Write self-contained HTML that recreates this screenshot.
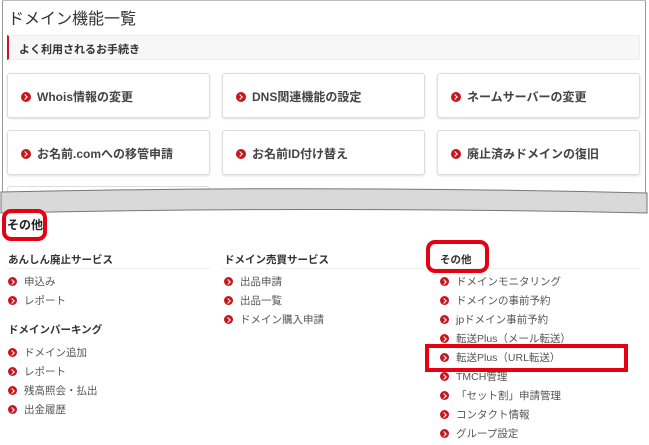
<!DOCTYPE html>
<html><head><meta charset="utf-8"><style>
*{margin:0;padding:0;box-sizing:border-box}
body{width:649px;height:445px;background:#fff;font-family:"Liberation Sans","Noto Sans CJK JP",sans-serif;color:#333;position:relative;overflow:hidden}
.a{position:absolute}
.frame{left:2px;top:0;width:644px;height:200px;border:1px solid #999;border-bottom:none;border-top:none}
.card{position:absolute;width:203px;height:45px;border:1px solid #ddd;border-radius:3px;box-shadow:0 1px 2px #ddd;background:#fff;font-size:12px;font-weight:bold;color:#444;padding:14px 0 0 13px;white-space:nowrap}
.ic{display:inline-block;width:10px;height:10px;border-radius:50%;background:#c8161d;position:relative;vertical-align:-1px;margin-right:6px}
.ic:after{content:"";position:absolute;left:2px;top:3px;width:3px;height:3px;border-right:1.5px solid #fff;border-top:1.5px solid #fff;transform:rotate(45deg)}
.it{position:absolute;font-size:10.5px;color:#555;white-space:nowrap}
.it .ic{width:9px;height:9px;margin-right:7px}
.it .ic:after{left:1.5px;top:2.5px}
.h{position:absolute;font-size:10.5px;font-weight:bold;color:#333}
.rb{position:absolute;border:4px solid #e60012}
</style></head><body>
<div class="a frame"></div>
<div class="a" style="left:2px;top:0;width:644px;height:1px;background:#bbb"></div>
<div class="a" style="left:8px;top:5px;font-size:16px;color:#333">ドメイン機能一覧</div>
<div class="a" style="left:7px;top:35px;width:633px;height:25px;background:#f7f7f7;border:1px solid #eee;border-left:2px solid #c8161d;font-size:11px;font-weight:bold;padding:5px 0 0 10px">よく利用されるお手続き</div>
<div class="card" style="left:7px;top:73px"><span class="ic"></span>Whois情報の変更</div>
<div class="card" style="left:222px;top:73px"><span class="ic"></span>DNS関連機能の設定</div>
<div class="card" style="left:437px;top:73px"><span class="ic"></span>ネームサーバーの変更</div>
<div class="card" style="left:7px;top:130px"><span class="ic"></span>お名前.comへの移管申請</div>
<div class="card" style="left:222px;top:130px"><span class="ic"></span>お名前ID付け替え</div>
<div class="card" style="left:437px;top:130px"><span class="ic"></span>廃止済みドメインの復旧</div>
<div class="card" style="left:7px;top:186px;height:10px;box-shadow:none"></div>
<svg class="a" style="left:0;top:186px" width="649" height="30"><path d="M1 6 Q320 -1 647 7 L647 27 Q320 20 1 27 Z" fill="#d9d9d9" stroke="#777" stroke-width="1"/></svg>
<div class="a" style="left:7px;top:216px;font-size:12px;font-weight:bold;color:#222">その他</div>
<div class="rb" style="left:2px;top:209px;width:45px;height:32px;border-radius:9px"></div>
<div class="a" style="left:7px;top:268px;width:203px;height:1px;background:#eee"></div>
<div class="a" style="left:222px;top:268px;width:203px;height:1px;background:#eee"></div>
<div class="a" style="left:437px;top:268px;width:203px;height:1px;background:#eee"></div>
<div class="h" style="left:8px;top:252px">あんしん廃止サービス</div>
<div class="h" style="left:224px;top:252px">ドメイン売買サービス</div>
<div class="h" style="left:440px;top:252px">その他</div>
<div class="rb" style="left:426px;top:240px;width:63px;height:33px;border-radius:9px"></div>
<div class="it" style="left:8px;top:274px"><span class="ic"></span>申込み</div>
<div class="it" style="left:8px;top:293px"><span class="ic"></span>レポート</div>
<div class="h" style="left:8px;top:322px">ドメインパーキング</div>
<div class="it" style="left:8px;top:345px"><span class="ic"></span>ドメイン追加</div>
<div class="it" style="left:8px;top:364px"><span class="ic"></span>レポート</div>
<div class="it" style="left:8px;top:383px"><span class="ic"></span>残高照会・払出</div>
<div class="it" style="left:8px;top:402px"><span class="ic"></span>出金履歴</div>
<div class="it" style="left:224px;top:274px"><span class="ic"></span>出品申請</div>
<div class="it" style="left:224px;top:293px"><span class="ic"></span>出品一覧</div>
<div class="it" style="left:224px;top:312px"><span class="ic"></span>ドメイン購入申請</div>
<div class="it" style="left:440px;top:274px"><span class="ic"></span>ドメインモニタリング</div>
<div class="it" style="left:440px;top:293px"><span class="ic"></span>ドメインの事前予約</div>
<div class="it" style="left:440px;top:312px"><span class="ic"></span>jpドメイン事前予約</div>
<div class="it" style="left:440px;top:331px"><span class="ic"></span>転送Plus（メール転送）</div>
<div class="it" style="left:440px;top:350px"><span class="ic"></span>転送Plus（URL転送）</div>
<div class="it" style="left:440px;top:369px"><span class="ic"></span>TMCH管理</div>
<div class="it" style="left:440px;top:388px"><span class="ic"></span>「セット割」申請管理</div>
<div class="it" style="left:440px;top:407px"><span class="ic"></span>コンタクト情報</div>
<div class="it" style="left:440px;top:426px"><span class="ic"></span>グループ設定</div>
<div class="rb" style="left:425px;top:344px;width:203px;height:28px"></div>
</body></html>
